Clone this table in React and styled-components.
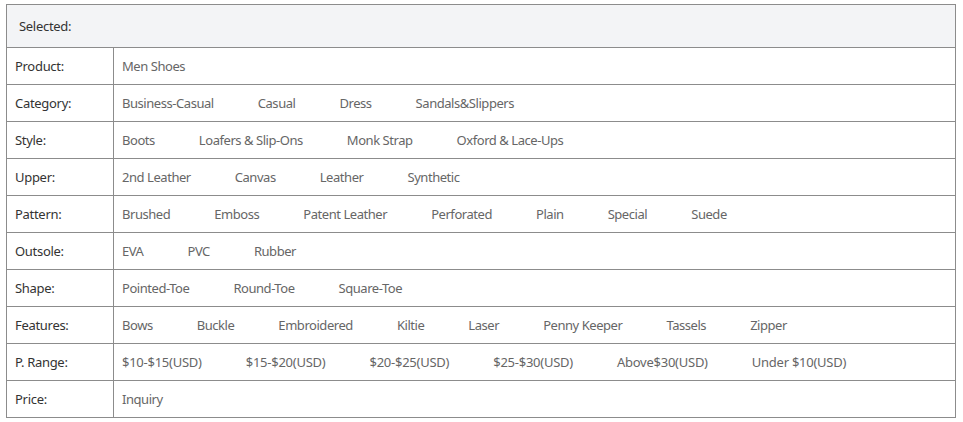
import React from "react";
import styled, { createGlobalStyle } from "styled-components";

const rows = [
  { label: "Product:", items: ["Men Shoes"] },
  { label: "Category:", items: ["Business-Casual", "Casual", "Dress", "Sandals&Slippers"] },
  { label: "Style:", items: ["Boots", "Loafers & Slip-Ons", "Monk Strap", "Oxford & Lace-Ups"] },
  { label: "Upper:", items: ["2nd Leather", "Canvas", "Leather", "Synthetic"] },
  {
    label: "Pattern:",
    items: ["Brushed", "Emboss", "Patent Leather", "Perforated", "Plain", "Special", "Suede"],
  },
  { label: "Outsole:", items: ["EVA", "PVC", "Rubber"] },
  { label: "Shape:", items: ["Pointed-Toe", "Round-Toe", "Square-Toe"] },
  {
    label: "Features:",
    items: ["Bows", "Buckle", "Embroidered", "Kiltie", "Laser", "Penny Keeper", "Tassels", "Zipper"],
  },
  {
    label: "P. Range:",
    items: [
      "$10-$15(USD)",
      "$15-$20(USD)",
      "$20-$25(USD)",
      "$25-$30(USD)",
      "Above$30(USD)",
      "Under $10(USD)",
    ],
  },
  { label: "Price:", items: ["Inquiry"] },
];

const GlobalStyle = createGlobalStyle`
  html, body {
    margin: 0;
    padding: 0;
    background: #fff;
  }
  body {
    font-family: "Noto Sans", "Open Sans", Arial, sans-serif;
  }
`;

const Wrap = styled.div`
  padding: 4px 7px 0 6px;
`;

const Table = styled.div`
  border: 1px solid #8c8c8c;
  width: 950px;
  box-sizing: border-box;
`;

const Head = styled.div`
  height: 42px;
  background: #f3f4f6;
  display: flex;
  align-items: center;
  padding-left: 12px;
  font-size: 13px;
  letter-spacing: -0.3px;
  color: #333;
  border-bottom: 1px solid #8c8c8c;
`;

const Row = styled.div`
  display: flex;
  height: 36px;
  border-bottom: 1px solid #8c8c8c;

  &:last-child {
    border-bottom: none;
  }
`;

const Label = styled.div`
  width: 107px;
  flex-shrink: 0;
  border-right: 1px solid #8c8c8c;
  display: flex;
  align-items: center;
  padding-left: 8px;
  box-sizing: border-box;
  font-size: 13px;
  letter-spacing: -0.3px;
  color: #333;
`;

const Values = styled.div`
  display: flex;
  align-items: center;
  padding-left: 8px;
  gap: 44px;
`;

const Item = styled.a`
  font-size: 13px;
  letter-spacing: ${(p) => (p.$numeric ? "-0.25px" : "-0.45px")};
  color: #666;
  text-decoration: none;
  cursor: pointer;
  white-space: nowrap;
`;

export default function App() {
  return (
    <>
      <GlobalStyle />
      <Wrap>
        <Table>
          <Head>Selected:</Head>
          {rows.map((row) => (
            <Row key={row.label}>
              <Label>{row.label}</Label>
              <Values>
                {row.items.map((item) => (
                  <Item key={item} $numeric={item.includes("$")}>
                    {item}
                  </Item>
                ))}
              </Values>
            </Row>
          ))}
        </Table>
      </Wrap>
    </>
  );
}
